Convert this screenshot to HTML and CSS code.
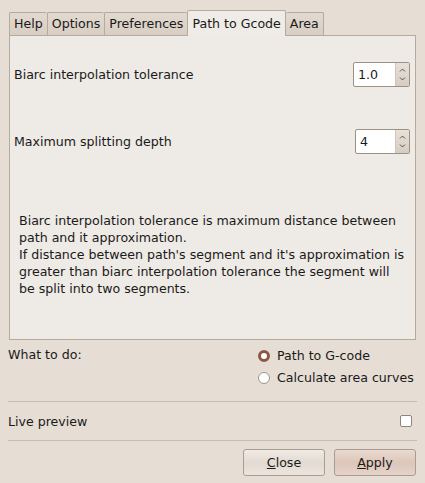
FILE: index.html
```html
<!DOCTYPE html>
<html lang="en">

<head>
    <meta charset="UTF-8">
    <title>Path to Gcode</title>
    <link rel="stylesheet" href="styles.css">
</head>

<body>
    <!-- Tabs -->
    <div class="tabs">
        <div class="tab">Help</div>
        <div class="tab">Options</div>
        <div class="tab">Preferences</div>
        <div class="tab active">Path to Gcode</div>
        <div class="tab">Area</div>
    </div>

    <!-- Notebook page -->
    <div class="page">
        <div class="row first">
            <span>Biarc interpolation tolerance</span>
            <div class="spin wide">
                <span class="spin-value">1.0</span>
                <span class="spin-arrows">
                    <svg width="13" height="23" viewBox="0 0 13 23"><path d="M4 8.5 L6.5 6 L9 8.5 M4 14.5 L6.5 17 L9 14.5" fill="none" stroke="#555" stroke-width="1"/></svg>
                </span>
            </div>
        </div>
        <div class="row second">
            <span>Maximum splitting depth</span>
            <div class="spin">
                <span class="spin-value">4</span>
                <span class="spin-arrows">
                    <svg width="13" height="23" viewBox="0 0 13 23"><path d="M4 8.5 L6.5 6 L9 8.5 M4 14.5 L6.5 17 L9 14.5" fill="none" stroke="#555" stroke-width="1"/></svg>
                </span>
            </div>
        </div>
        <p class="help">Biarc interpolation tolerance is maximum distance between<br>path and it approximation.<br>If distance between path's segment and it's approximation is<br>greater than biarc interpolation tolerance the segment will<br>be split into two segments.</p>
    </div>

    <!-- What to do -->
    <div class="todo">
        <span class="todo-label">What to do:</span>
        <div class="radios">
            <label class="radio checked"><span class="dot"></span>Path to G-code</label>
            <label class="radio"><span class="dot"></span>Calculate area curves</label>
        </div>
    </div>

    <div class="live">
        <span>Live preview</span>
        <span class="check"></span>
    </div>

    <div class="buttons">
        <button class="btn"><u>C</u>lose</button>
        <button class="btn apply"><u>A</u>pply</button>
    </div>
</body>

</html>
```

FILE: styles.css
```css
body {
    margin: 0;
    width: 425px;
    height: 483px;
    background-color: #e6ded5;
    font-family: "DejaVu Sans", sans-serif;
    font-size: 12.6px;
    color: #1a1a1a;
    overflow: hidden;
}

.tabs {
    display: flex;
    align-items: flex-end;
    padding: 10px 0 0 9px;
    height: 25px;
}

.tab {
    height: 22px;
    line-height: 22px;
    padding: 0 4px;
    border: 1px solid #b6aa9c;
    border-bottom: none;
    border-right: none;
    border-radius: 2px 2px 0 0;
    background: linear-gradient(#e2d9cf, #d8cec3);
}

.tab:last-child {
    border-right: 1px solid #b6aa9c;
}

.tab.active {
    height: 25px;
    line-height: 25px;
    background: #efebe6;
    border-right: 1px solid #b6aa9c;
    padding: 0 4px;
    margin-bottom: -1px;
    position: relative;
}

.tab.active + .tab {
    border-left: none;
}

.page {
    margin: 0 9px 0 9px;
    height: 303px;
    border: 1px solid #b6aa9c;
    background-color: #eeeae5;
    padding: 0 5px 0 4px;
}

.row {
    display: flex;
    justify-content: space-between;
    align-items: center;
    height: 25px;
}

.row.first {
    margin-top: 26px;
}

.row.second {
    margin-top: 42px;
}

.spin {
    display: flex;
    width: 53px;
    height: 23px;
    border: 1px solid #9d9186;
    border-radius: 2px;
    background: #fff;
}

.spin.wide {
    width: 55px;
}

.spin-value {
    flex: 1;
    line-height: 23px;
    padding-left: 4px;
}

.spin-arrows {
    width: 13px;
    border-left: 1px solid #cfc6bc;
    background: linear-gradient(#e8e1d9, #d6ccc1);
    display: flex;
}

.help {
    margin: 58px 0 0 5px;
    line-height: 17px;
    white-space: nowrap;
}

.todo {
    display: flex;
    justify-content: space-between;
    padding: 7px 0 0 8px;
    height: 54px;
}

.radios {
    display: flex;
    flex-direction: column;
    gap: 5px;
    width: 167px;
    white-space: nowrap;
}

.radio {
    display: flex;
    align-items: center;
    height: 17px;
}

.dot {
    width: 12px;
    height: 12px;
    border: 1px solid #a0958a;
    border-radius: 50%;
    background: #fff;
    margin-right: 7px;
    box-sizing: border-box;
}

.radio.checked .dot {
    border: 3px solid #8b5a45;
}

.live {
    margin: 0 8px;
    border-top: 1px solid #c8bcb0;
    border-bottom: 1px solid #c8bcb0;
    height: 38px;
    display: flex;
    justify-content: space-between;
    align-items: center;
    padding: 0 5px 0 0;
}

.check {
    width: 10px;
    height: 10px;
    border: 1px solid #8f8479;
    border-radius: 2px;
    background: #fff;
}

.buttons {
    display: flex;
    justify-content: flex-end;
    gap: 9px;
    padding: 8px 9px 0 0;
}

.btn {
    width: 82px;
    height: 27px;
    font-family: "DejaVu Sans", sans-serif;
    font-size: 12.6px;
    color: #1a1a1a;
    border: 1px solid #a99d91;
    border-radius: 3px;
    background: linear-gradient(#f1ebe5, #e3dad1 50%, #ece5de);
}

.btn.apply {
    background: linear-gradient(#ead9d0, #ddc6ba 50%, #e5d3ca);
}
```
